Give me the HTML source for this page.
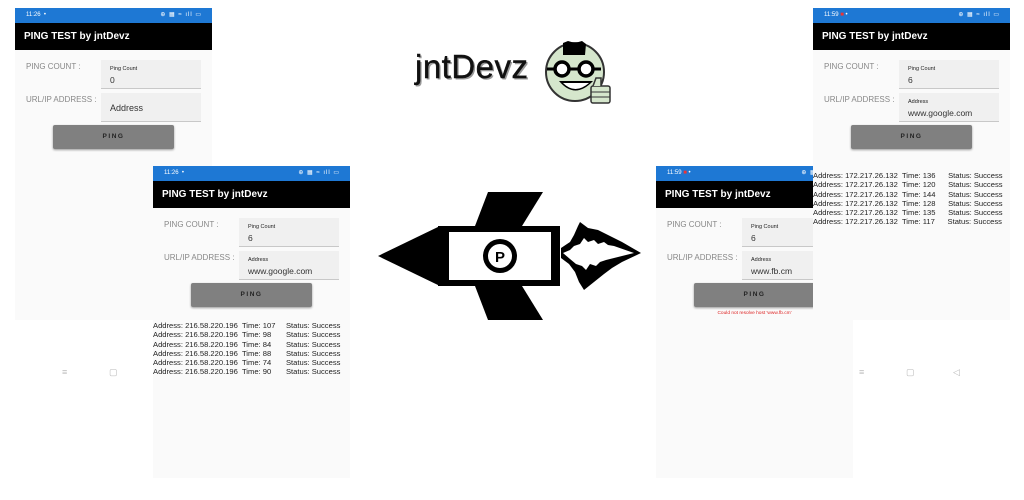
<!DOCTYPE html>
<html><head><meta charset="utf-8"><style>
*{margin:0;padding:0;box-sizing:border-box}
body{width:1024px;height:500px;background:#fff;position:relative;overflow:hidden;font-family:"Liberation Sans",sans-serif}
.scr{position:absolute;width:197px;background:#fafafa;overflow:hidden}
.sb{position:absolute;left:0;top:0;width:100%;height:15px;background:#1e78d4;color:#fff;font-size:6px;line-height:15px;padding-left:11px}
.sb i{font-style:normal;position:absolute;right:10px;top:0;letter-spacing:1px}
.tb{position:absolute;left:0;top:15px;width:100%;height:27px;background:#000;color:#fff;font-weight:bold;font-size:10px;line-height:27px;padding-left:9px}
.lb{position:absolute;left:11px;color:#888;font-size:8px}
.fd{position:absolute;left:86px;width:100px;height:29px;background:#f0f0f0;border-bottom:1px solid #c8c8c8}
.fd .s{position:absolute;left:9px;top:6px;font-size:5.5px;color:#222}
.fd .v{position:absolute;left:9px;top:15px;font-size:8.5px;color:#333}
.fd .big{top:10px;font-size:9px}
.bt{position:absolute;left:38px;top:117px;width:121px;height:24px;background:#808080;border-radius:2px;box-shadow:0 1px 2px #999;color:#222;font-size:6.5px;font-weight:bold;letter-spacing:1.5px;text-align:center;line-height:24px}
.rs{position:absolute;left:0;font-size:7.6px;line-height:9.3px;color:#222;white-space:pre}
.nav{position:absolute;color:#bbb;font-size:9px}
</style></head><body>

<!-- Screen A -->
<div class="scr" style="left:15px;top:8px;height:312px">
<div class="sb">11:26 &nbsp;•<i>⊕ ▦ ≈ ıll ▭</i></div>
<div class="tb">PING TEST by jntDevz</div>
<div class="lb" style="top:54px">PING COUNT :</div>
<div class="fd" style="top:52px"><span class="s">Ping Count</span><span class="v">0</span></div>
<div class="lb" style="top:87px">URL/IP ADDRESS :</div>
<div class="fd" style="top:85px"><span class="v big">Address</span></div>
<div class="bt">PING</div>
</div>
<div class="nav" style="left:62px;top:367px">≡</div>
<div class="nav" style="left:109px;top:367px">▢</div>

<!-- Screen C -->
<div class="scr" style="left:656px;top:166px;height:312px">
<div class="sb">11:59 <span style="color:#e33">■</span> •<i>⊕ ▦ ≈ ıll ▭</i></div>
<div class="tb">PING TEST by jntDevz</div>
<div class="lb" style="top:54px">PING COUNT :</div>
<div class="fd" style="top:52px"><span class="s">Ping Count</span><span class="v">6</span></div>
<div class="lb" style="top:87px">URL/IP ADDRESS :</div>
<div class="fd" style="top:85px"><span class="s">Address</span><span class="v">www.fb.cm</span></div>
<div class="bt">PING</div>
<div style="position:absolute;left:0;width:197px;top:145px;text-align:center;font-size:4.8px;color:#d22">Could not resolve host 'www.fb.cm'</div>
</div>

<!-- Screen D -->
<div class="scr" style="left:813px;top:8px;height:312px">
<div class="sb">11:59 <span style="color:#e33">■</span> •<i>⊕ ▦ ≈ ıll ▭</i></div>
<div class="tb">PING TEST by jntDevz</div>
<div class="lb" style="top:54px">PING COUNT :</div>
<div class="fd" style="top:52px"><span class="s">Ping Count</span><span class="v">6</span></div>
<div class="lb" style="top:87px">URL/IP ADDRESS :</div>
<div class="fd" style="top:85px"><span class="s">Address</span><span class="v">www.google.com</span></div>
<div class="bt">PING</div>
<div class="rs" style="top:163px">Address: 172.217.26.132  Time: 136      Status: Success
Address: 172.217.26.132  Time: 120      Status: Success
Address: 172.217.26.132  Time: 144      Status: Success
Address: 172.217.26.132  Time: 128      Status: Success
Address: 172.217.26.132  Time: 135      Status: Success
Address: 172.217.26.132  Time: 117      Status: Success</div>
</div>
<div class="nav" style="left:859px;top:367px">≡</div>
<div class="nav" style="left:906px;top:367px">▢</div>
<div class="nav" style="left:953px;top:367px">◁</div>

<!-- Screen B -->
<div class="scr" style="left:153px;top:166px;height:312px">
<div class="sb">11:26 &nbsp;•<i>⊕ ▦ ≈ ıll ▭</i></div>
<div class="tb">PING TEST by jntDevz</div>
<div class="lb" style="top:54px">PING COUNT :</div>
<div class="fd" style="top:52px"><span class="s">Ping Count</span><span class="v">6</span></div>
<div class="lb" style="top:87px">URL/IP ADDRESS :</div>
<div class="fd" style="top:85px"><span class="s">Address</span><span class="v">www.google.com</span></div>
<div class="bt">PING</div>
<div class="rs" style="top:155px">Address: 216.58.220.196  Time: 107     Status: Success
Address: 216.58.220.196  Time: 98       Status: Success
Address: 216.58.220.196  Time: 84       Status: Success
Address: 216.58.220.196  Time: 88       Status: Success
Address: 216.58.220.196  Time: 74       Status: Success
Address: 216.58.220.196  Time: 90       Status: Success</div>
</div>

<!-- Logo -->
<div style="position:absolute;left:415px;top:48px;font-size:33px;color:#111;letter-spacing:0.5px;-webkit-text-stroke:0.4px #111;text-shadow:1.5px 1.5px 0 #999">jntDevz</div>
<svg style="position:absolute;left:0;top:0" width="1024" height="500">
<circle cx="575" cy="72" r="29" fill="#d5e6cc" stroke="#333" stroke-width="2"/>
<path d="M563 55 L563 43 L568 41 L575 43 L582 41 L586 44 L585 55 Z" fill="#000"/>
<circle cx="562" cy="69" r="7" fill="#fff" stroke="#000" stroke-width="3.5"/>
<circle cx="586" cy="69" r="7" fill="#fff" stroke="#000" stroke-width="3.5"/>
<line x1="547" y1="69" x2="555" y2="69" stroke="#000" stroke-width="3"/>
<line x1="569" y1="69" x2="579" y2="69" stroke="#000" stroke-width="3"/>
<line x1="593" y1="69" x2="601" y2="69" stroke="#000" stroke-width="3"/>
<path d="M559 81 Q575 100 593 81 Z" fill="#000"/>
<path d="M563 83 Q575 95 589 83 Z" fill="#fff"/>
<rect x="591" y="86" width="19" height="17" rx="2" fill="#d5e6cc" stroke="#333" stroke-width="1.5"/>
<path d="M593 86 L596 78 L601 78 L601 86" fill="#d5e6cc" stroke="#333" stroke-width="1.5"/>
<line x1="591" y1="92" x2="610" y2="92" stroke="#333"/><line x1="591" y1="97" x2="610" y2="97" stroke="#333"/>

<!-- Rocket -->
<polygon points="488,192 543,192 522,226 475,226" fill="#000"/>
<polygon points="475,286 522,286 543,320 488,320" fill="#000"/>
<polygon points="378,256 440,226 440,286" fill="#000"/>
<rect x="438" y="226" width="122" height="60" fill="#000"/>
<rect x="449" y="232" width="102" height="48" fill="#fff"/>
<circle cx="500" cy="256" r="17" fill="#000"/>
<circle cx="500" cy="256" r="12" fill="#fff"/>
<text x="500" y="262" text-anchor="middle" font-family="Liberation Sans" font-weight="bold" font-size="15" fill="#000">P</text>
<polygon points="561,248 570,242 574,235 578,226 580,222 588,228 598,230 606,234 614,238 622,242 641,253 622,262 612,268 604,274 594,282 584,290 579,282 575,272 569,264 561,258" fill="#000"/>
<polygon points="563,253 570,250 574,246 580,244 584,238 588,242 594,240 598,244 604,242 608,245 614,246 634,253 614,258 606,260 600,262 596,266 590,264 586,270 582,266 576,264 570,259" fill="#fff"/>
</svg>
</body></html>
